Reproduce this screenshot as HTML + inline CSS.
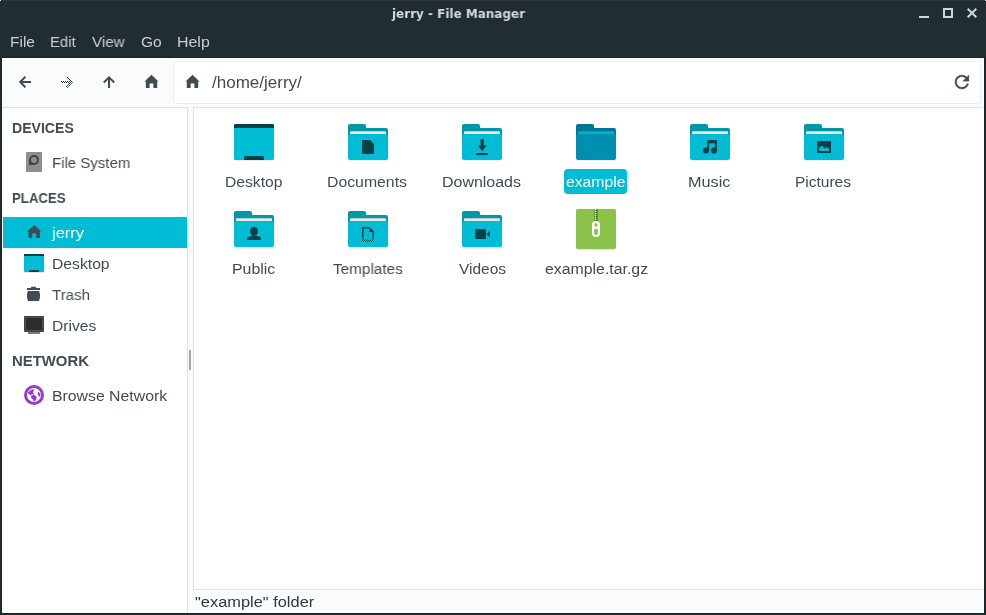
<!DOCTYPE html>
<html><head><meta charset="utf-8"><title>jerry - File Manager</title>
<style>
*{box-sizing:border-box;margin:0;padding:0}
html,body{width:986px;height:615px;overflow:hidden;background:#222d32}
body{font-family:"Liberation Sans",sans-serif;font-size:15.5px;color:#414c52;position:relative}
.a{position:absolute}
.t{position:absolute;white-space:nowrap;line-height:20px;height:20px;will-change:transform;transform-origin:0 0}
.h{font-weight:700}
.m{color:#c9ced1}
.l{position:absolute;white-space:nowrap;line-height:20px;height:20px;text-align:center;width:140px;will-change:transform}
#ic{position:absolute;left:0;top:0}
</style></head><body>
<div class="a" style="left:2px;top:0;width:982px;height:1px;background:#2c383e"></div>
<div class="a" style="left:1px;top:57px;width:984px;height:557px;background:#19242a"></div>
<div class="a" style="left:0;top:0;width:1px;height:1px;background:#fff"></div><div class="a" style="left:985px;top:0;width:1px;height:1px;background:#fff"></div>
<div class="a" style="left:1px;top:0;width:1px;height:1px;background:#19242a"></div><div class="a" style="left:0;top:1px;width:1px;height:1px;background:#19242a"></div><div class="a" style="left:984px;top:0;width:1px;height:1px;background:#19242a"></div><div class="a" style="left:985px;top:1px;width:1px;height:1px;background:#19242a"></div>
<div class="a" style="left:2px;top:58px;width:982px;height:555px;background:#fafbfc;border-top:1px solid #fff"></div>
<div class="a" style="left:983px;top:58px;width:1px;height:555px;background:#fff"></div><div class="a" style="left:2px;top:58px;width:1px;height:555px;background:#fff"></div>
<div class="a" style="left:173px;top:61px;width:808px;height:43px;background:#fff;border:1px solid #eaeced;border-radius:2.5px"></div>
<div class="a" style="left:2px;top:107px;width:186px;height:506px;background:#fff;border-top:1px solid #dfe2e4;border-right:1px solid #dfe2e4"></div>
<div class="a" style="left:3px;top:217px;width:184px;height:31px;background:#00bcd4"></div>
<div class="a" style="left:189px;top:350px;width:2px;height:20px;background:#a0a6a9"></div>
<div class="a" style="left:193px;top:107px;width:790px;height:483px;background:#fff;border:1px solid #dfe2e4;border-right:none"></div>
<div class="a" style="left:564px;top:169px;width:63px;height:25px;background:#00bcd4;border-radius:4px"></div>
<div class="t" style="left:391.80px;top:4px;font-weight:700;font-size:12px;font-family:'DejaVu Sans',sans-serif;color:#d3d9dc;transform:scaleX(0.9972)">jerry - File Manager</div>
<div class="t" style="left:10.14px;top:32px;color:#c9ced1;transform:scaleX(0.9801)">File</div>
<div class="t" style="left:50.17px;top:32px;color:#c9ced1;transform:scaleX(0.9603)">Edit</div>
<div class="t" style="left:92.11px;top:32px;color:#c9ced1;transform:scaleX(0.9816)">View</div>
<div class="t" style="left:141.18px;top:32px;color:#c9ced1;transform:scaleX(0.9820)">Go</div>
<div class="t" style="left:176.68px;top:32px;color:#c9ced1;transform:scaleX(1.0274)">Help</div>
<div class="t" style="left:212.45px;top:73px;font-size:16px;transform:scaleX(1.0634)">/home/jerry/</div>
<div class="t" style="left:11.90px;top:118px;font-weight:700;font-size:14px;transform:scaleX(1.0050)">DEVICES</div>
<div class="t" style="left:51.86px;top:153px;transform:scaleX(0.9683)">File System</div>
<div class="t" style="left:11.96px;top:188px;font-weight:700;font-size:14px;transform:scaleX(0.9435)">PLACES</div>
<div class="t" style="left:51.50px;top:223px;color:#fff;transform:scaleX(1.0648)">jerry</div>
<div class="t" style="left:51.80px;top:254px;transform:scaleX(1.0131)">Desktop</div>
<div class="t" style="left:52.25px;top:285px;transform:scaleX(0.9724)">Trash</div>
<div class="t" style="left:51.81px;top:316px;transform:scaleX(1.0071)">Drives</div>
<div class="t" style="left:11.74px;top:351px;font-weight:700;font-size:14px;transform:scaleX(1.0636)">NETWORK</div>
<div class="t" style="left:51.59px;top:386px;transform:scaleX(1.0200)">Browse Network</div>
<div class="t" style="left:224.71px;top:172px;transform:scaleX(1.0094)">Desktop</div>
<div class="t" style="left:327.29px;top:172px;transform:scaleX(1.0197)">Documents</div>
<div class="t" style="left:442.18px;top:172px;transform:scaleX(1.0299)">Downloads</div>
<div class="t" style="left:566.06px;top:172px;color:#fff;transform:scaleX(1.0133)">example</div>
<div class="t" style="left:688.26px;top:172px;transform:scaleX(1.0476)">Music</div>
<div class="t" style="left:795.42px;top:172px;transform:scaleX(0.9981)">Pictures</div>
<div class="t" style="left:232.39px;top:259px;transform:scaleX(1.0241)">Public</div>
<div class="t" style="left:333.34px;top:259px;transform:scaleX(0.9874)">Templates</div>
<div class="t" style="left:458.80px;top:259px;transform:scaleX(0.9916)">Videos</div>
<div class="t" style="left:544.55px;top:259px;transform:scaleX(1.0227)">example.tar.gz</div>
<div class="t" style="left:194.67px;top:592px;color:#2c383e;transform:scaleX(1.0581)">&quot;example&quot; folder</div>
<svg id="ic" width="986" height="615" viewBox="0 0 986 615"><g fill="none" stroke="#414c52" stroke-width="2" stroke-linejoin="miter"><path d="M31 82H20.600M25.400 76.800L20.200 82l5.200 5.200"/><path d="M109 88V77.700M103.800 82.500L109 77.300l5.200 5.200"/></g><pattern id="chk" width="2" height="2" patternUnits="userSpaceOnUse"><rect x="0" y="0" width="1" height="1" fill="#2b363c"/><rect x="1" y="1" width="1" height="1" fill="#2b363c"/></pattern><g fill="none" stroke="url(#chk)" stroke-width="2"><path d="M61 82h10.400M66.600 76.800l5.200 5.200-5.200 5.200"/></g><path fill="#414c52" d="M151.5 74.8l7 6.6h-1.3v6.6h-3.8v-4.6h-3.8v4.6h-3.8v-6.6h-1.3z"/><path fill="#414c52" d="M192.5 74.8l7 6.6h-1.3v6.6h-3.8v-4.6h-3.8v4.6h-3.8v-6.6h-1.3z"/><g transform="translate(951.4 71.5) scale(0.875)"><path fill="#414c52" stroke="#414c52" stroke-width=".35" d="M17.65 6.35C16.2 4.9 14.21 4 12 4c-4.42 0-7.99 3.58-7.99 8s3.57 8 7.99 8c3.73 0 6.84-2.55 7.73-6h-2.08c-.82 2.33-3.04 4-5.65 4-3.31 0-6-2.69-6-6s2.69-6 6-6c1.66 0 3.14.69 4.22 1.78L13 11h7V4l-2.35 2.35z"/></g><rect x="26" y="152" width="16" height="20" rx=".6" fill="#8e8e8e"/><path fill="#424242" d="M29 160a5 5 0 1 1 5 5h-5z"/><circle cx="34" cy="160" r="3" fill="#8e8e8e"/><path fill="#414c52" d="M34.4 225l6.8 6.4h-1.3v6.6h-3.8v-4.6h-3.8v4.6h-3.8v-6.6h-1.3z"/><rect x="24" y="254" width="20" height="18" rx="1" fill="#00bcd4"/><path fill="#00424a" d="M24 255a1 1 0 0 1 1-1h18a1 1 0 0 1 1 1v1H24z"/><path fill="#00424a" d="M29 271a1 1 0 0 1 1-1h8a1 1 0 0 1 1 1v1H29z"/><rect x="24.5" y="272" width="19" height=".6" fill="#6d4c41" opacity=".25"/><g fill="#414c52"><rect x="31" y="286.800" width="5" height="2" rx=".5"/><rect x="27" y="288" width="13" height="2"/><path d="M28.300 291h10.400c.2 0 .35.100.45.300 1.200 3 1.200 6.300 0 9.300-.1.250-.25.400-.5.400H28.350c-.25 0-.4-.15-.5-.4-1.200-3-1.200-6.300 0-9.300.1-.2.250-.3.450-.3z"/></g><rect x="24" y="316" width="20" height="16" rx=".8" fill="#3d3d3d"/><rect x="24.700" y="316.700" width="18.600" height="14.600" rx=".4" fill="#505050"/><rect x="26" y="318" width="16" height="12" fill="#2d2d2d"/><rect x="28" y="332" width="12" height="2" fill="#7c7c7c"/><circle cx="34" cy="395" r="8.500" fill="#fff" stroke="#983acd" stroke-width="3"/><g fill="#983acd"><path d="M27.800 392.600l2.200-2.200 3.400-1.500.6 1.800-1.300 1.500 1.400 1.200-.5 1.100-1.800-.6-.6 1.500-2.200-1.200z"/><path d="M31 396.100l2.500-1.300 2.400 1 .9 2-.9 2.200-2 1.700-.9-2.200-1.800-1.500z"/><path d="M37.800 392.700l1.100-.9 1.400 2.800-.2 2.600-1.400-1.400-1-1.600z"/></g><g transform="translate(230 118)"><path fill="#6d4c41" opacity=".22" d="M5 40h38v1a1.5 1.5 0 0 1-1.5 1.5h-35A1.5 1.5 0 0 1 5 41z"/><rect x="4" y="6" width="40" height="36" rx="1.6" fill="#00bcd4"/><path fill="#00424a" d="M4 7.6A1.6 1.6 0 0 1 5.600 6h36.800A1.600 1.600 0 0 1 44 7.600V10H4z"/><path fill="#00424a" d="M14 39.500A1.500 1.500 0 0 1 15.500 38h17a1.500 1.500 0 0 1 1.500 1.500V42H14z"/></g><g transform="translate(344 118)"><path fill="#6d4c41" opacity=".22" d="M5 40h38v1a1.5 1.5 0 0 1-1.5 1.5h-35A1.5 1.5 0 0 1 5 41z"/><path fill="#0097a7" d="M4 8a2 2 0 0 1 2-2h14a2 2 0 0 1 2 2v2h20a2 2 0 0 1 2 2v10H4z"/><rect fill="#ede7e6" x="6" y="13.200" width="36" height="5" rx="1"/><path fill="#00bcd4" d="M4 18a2 2 0 0 1 2-2h36a2 2 0 0 1 2 2v22a2 2 0 0 1-2 2H6a2 2 0 0 1-2-2z"/></g><path fill="#00424a" d="M362.800 140h7.200l4 4v9.200a.8.8 0 0 1-.8.800h-10.400a.8.8 0 0 1-.8-.8v-12.400a.8.8 0 0 1 .8-.8z"/><g transform="translate(458 118)"><path fill="#6d4c41" opacity=".22" d="M5 40h38v1a1.5 1.5 0 0 1-1.5 1.5h-35A1.5 1.5 0 0 1 5 41z"/><path fill="#0097a7" d="M4 8a2 2 0 0 1 2-2h14a2 2 0 0 1 2 2v2h20a2 2 0 0 1 2 2v10H4z"/><rect fill="#ede7e6" x="6" y="13.200" width="36" height="5" rx="1"/><path fill="#00bcd4" d="M4 18a2 2 0 0 1 2-2h36a2 2 0 0 1 2 2v22a2 2 0 0 1-2 2H6a2 2 0 0 1-2-2z"/></g><path fill="#00424a" d="M480.500 139h3.500v6.600h2.400l-4.150 5.700-4.150-5.700h2.400zM476 153h12v2h-12z"/><g transform="translate(572 118)"><path fill="#6d4c41" opacity=".22" d="M5 40h38v1a1.5 1.5 0 0 1-1.5 1.5h-35A1.5 1.5 0 0 1 5 41z"/><path fill="#007595" d="M4 8a2 2 0 0 1 2-2h14a2 2 0 0 1 2 2v2h20a2 2 0 0 1 2 2v10H4z"/><rect fill="#00b1ca" x="6" y="13.200" width="36" height="5" rx="1"/><path fill="#008eb1" d="M4 18a2 2 0 0 1 2-2h36a2 2 0 0 1 2 2v22a2 2 0 0 1-2 2H6a2 2 0 0 1-2-2z"/></g><g transform="translate(686 118)"><path fill="#6d4c41" opacity=".22" d="M5 40h38v1a1.5 1.5 0 0 1-1.5 1.5h-35A1.5 1.5 0 0 1 5 41z"/><path fill="#0097a7" d="M4 8a2 2 0 0 1 2-2h14a2 2 0 0 1 2 2v2h20a2 2 0 0 1 2 2v10H4z"/><rect fill="#ede7e6" x="6" y="13.200" width="36" height="5" rx="1"/><path fill="#00bcd4" d="M4 18a2 2 0 0 1 2-2h36a2 2 0 0 1 2 2v22a2 2 0 0 1-2 2H6a2 2 0 0 1-2-2z"/></g><g fill="#00424a"><path d="M707 140.800a.8.8 0 0 1 .8-.8h8.400a.8.8 0 0 1 .8.800V150.500h-2.200V143.200h-5.600V150.500H707z"/><circle cx="706" cy="150.500" r="3.100"/><circle cx="714" cy="150.500" r="3.100"/></g><g transform="translate(800 118)"><path fill="#6d4c41" opacity=".22" d="M5 40h38v1a1.5 1.5 0 0 1-1.5 1.5h-35A1.5 1.5 0 0 1 5 41z"/><path fill="#0097a7" d="M4 8a2 2 0 0 1 2-2h14a2 2 0 0 1 2 2v2h20a2 2 0 0 1 2 2v10H4z"/><rect fill="#ede7e6" x="6" y="13.200" width="36" height="5" rx="1"/><path fill="#00bcd4" d="M4 18a2 2 0 0 1 2-2h36a2 2 0 0 1 2 2v22a2 2 0 0 1-2 2H6a2 2 0 0 1-2-2z"/></g><rect x="817" y="141" width="14" height="12" rx=".8" fill="#00424a"/><path fill="#00bcd4" d="M819 151v-2.800l2.600-2.600 3 3 2.500-1.700 1.900 2.400v1.700z"/><g transform="translate(230 205)"><path fill="#6d4c41" opacity=".22" d="M5 40h38v1a1.5 1.5 0 0 1-1.5 1.5h-35A1.5 1.5 0 0 1 5 41z"/><path fill="#0097a7" d="M4 8a2 2 0 0 1 2-2h14a2 2 0 0 1 2 2v2h20a2 2 0 0 1 2 2v10H4z"/><rect fill="#ede7e6" x="6" y="13.200" width="36" height="5" rx="1"/><path fill="#00bcd4" d="M4 18a2 2 0 0 1 2-2h36a2 2 0 0 1 2 2v22a2 2 0 0 1-2 2H6a2 2 0 0 1-2-2z"/></g><g fill="#00424a"><path d="M254 226.800c2.400 0 4 1.800 4 4.200 0 2.600-1.700 5-4 5s-4-2.400-4-5c0-2.400 1.600-4.200 4-4.200z"/><path d="M247 240v-1.600c0-1 .6-1.500 1.500-1.700l3.300-.9h4.400l3.300.9c.9.200 1.500.7 1.500 1.700v1.600z"/></g><g transform="translate(344 205)"><path fill="#6d4c41" opacity=".22" d="M5 40h38v1a1.5 1.5 0 0 1-1.5 1.5h-35A1.5 1.5 0 0 1 5 41z"/><path fill="#0097a7" d="M4 8a2 2 0 0 1 2-2h14a2 2 0 0 1 2 2v2h20a2 2 0 0 1 2 2v10H4z"/><rect fill="#ede7e6" x="6" y="13.200" width="36" height="5" rx="1"/><path fill="#00bcd4" d="M4 18a2 2 0 0 1 2-2h36a2 2 0 0 1 2 2v22a2 2 0 0 1-2 2H6a2 2 0 0 1-2-2z"/></g><pattern id="chk2" width="2" height="2" patternUnits="userSpaceOnUse"><rect x="0" y="0" width="1" height="1" fill="#00424a"/><rect x="1" y="1" width="1" height="1" fill="#00424a"/></pattern><path fill="none" stroke="#00424a" stroke-width="1.500" d="M362.750 237.500v-9.750h6.500l4 4v5.750"/><path fill="#00424a" d="M369.500 227.700l4.300 4.300h-4.300z"/><path fill="none" stroke="url(#chk2)" stroke-width="2" d="M363 237.500v3.200h10v-3.200"/><g transform="translate(458 205)"><path fill="#6d4c41" opacity=".22" d="M5 40h38v1a1.5 1.5 0 0 1-1.5 1.5h-35A1.5 1.5 0 0 1 5 41z"/><path fill="#0097a7" d="M4 8a2 2 0 0 1 2-2h14a2 2 0 0 1 2 2v2h20a2 2 0 0 1 2 2v10H4z"/><rect fill="#ede7e6" x="6" y="13.200" width="36" height="5" rx="1"/><path fill="#00bcd4" d="M4 18a2 2 0 0 1 2-2h36a2 2 0 0 1 2 2v22a2 2 0 0 1-2 2H6a2 2 0 0 1-2-2z"/></g><rect x="475" y="229" width="11" height="10" rx="1" fill="#00424a"/><path fill="#00424a" d="M486.300 234l3.600-3.200v6.400z"/><path fill="#33691e" opacity=".25" d="M577 247h38v1a1.500 1.500 0 0 1-1.500 1.500h-35a1.500 1.500 0 0 1-1.500-1.500z"/><rect x="576" y="209" width="40" height="40" rx="1.600" fill="#8bc34a"/><rect x="594.200" y="209" width="3.600" height="12.500" fill="#5f8f33"/><g fill="#fff"><rect x="594.900" y="209" width="1.300" height="1.100"/><rect x="594.900" y="211" width="1.300" height="1.100"/><rect x="594.900" y="213" width="1.300" height="1.100"/><rect x="594.900" y="215" width="1.300" height="1.100"/><rect x="594.900" y="217" width="1.300" height="1.100"/><rect x="594.900" y="219" width="1.300" height="1.100"/></g><g fill="#3d6a1c"><rect x="596.300" y="210" width="1.200" height="1"/><rect x="596.300" y="212" width="1.200" height="1"/><rect x="596.300" y="214" width="1.200" height="1"/><rect x="596.300" y="216" width="1.200" height="1"/><rect x="596.300" y="218" width="1.200" height="1"/><rect x="596.300" y="220" width="1.200" height="1"/></g><rect x="592" y="221" width="8" height="16" rx="4" fill="#fff"/><circle cx="596" cy="225" r="1.700" fill="#8bc34a"/><ellipse cx="596" cy="231.700" rx="2" ry="3.200" fill="#8bc34a"/><g fill="none" stroke="#cfd6d9" stroke-width="2"><path d="M919 17h10"/><rect x="944" y="9" width="8" height="8"/><path d="M967.700 8.700l8.600 8.600M976.300 8.700l-8.600 8.600"/></g></svg>
</body></html>
